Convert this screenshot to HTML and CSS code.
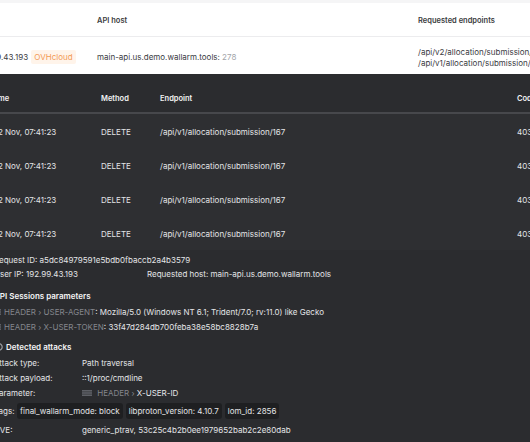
FILE: index.html
```html
<!DOCTYPE html>
<html lang="en">
<head>
    <meta charset="UTF-8">
    <title>Attack details</title>
    <link rel="stylesheet" href="styles.css">
</head>
<body>
    <div class="page">
        <div class="strip"></div>
        <div class="hosts">
            <div class="hosts-row head">
                <div class="cell ip-col">Source</div>
                <div class="cell">API host</div>
                <div class="cell">Requested endpoints</div>
            </div>
            <div class="hosts-row">
                <div class="cell ip-col">192.99.43.193 <span class="badge">OVHcloud</span></div>
                <div class="cell">main-api.us.demo.wallarm.tools: <span class="muted">278</span></div>
                <div class="cell endpoints">
                    <div>/api/v2/allocation/submission/167</div>
                    <div>/api/v1/allocation/submission/167</div>
                </div>
            </div>
        </div>

        <div class="dark">
            <div class="req-row head">
                <div>Time</div>
                <div>Method</div>
                <div>Endpoint</div>
                <div>Code</div>
            </div>
            <div class="req-row">
                <div class="time">22 Nov, 07:41:23</div>
                <div>DELETE</div>
                <div>/api/v1/allocation/submission/167</div>
                <div>403</div>
            </div>
            <div class="req-row">
                <div class="time">22 Nov, 07:41:23</div>
                <div>DELETE</div>
                <div>/api/v1/allocation/submission/167</div>
                <div>403</div>
            </div>
            <div class="req-row">
                <div class="time">22 Nov, 07:41:23</div>
                <div>DELETE</div>
                <div>/api/v1/allocation/submission/167</div>
                <div>403</div>
            </div>
            <div class="req-row">
                <div class="time">22 Nov, 07:41:23</div>
                <div>DELETE</div>
                <div>/api/v1/allocation/submission/167</div>
                <div>403</div>
            </div>

            <div class="details">
                <div class="line">Request ID: a5dc84979591e5bdb0fbaccb2a4b3579</div>
                <div class="line split">
                    <span class="user-ip">User IP: 192.99.43.193</span>
                    <span>Requested host: main-api.us.demo.wallarm.tools</span>
                </div>

                <div class="section-title">API Sessions parameters</div>
                <div class="line session">
                    <svg class="point-icon" width="10" height="6" viewBox="0 0 10 6"><rect x="0" y="0" width="10" height="1.6" fill="#5e6066"/><rect x="0" y="2.2" width="10" height="1.6" fill="#5e6066"/><rect x="0" y="4.4" width="10" height="1.6" fill="#5e6066"/></svg>
                    <span class="path">HEADER › USER-AGENT</span>: Mozilla/5.0 (Windows NT 6.1; Trident/7.0; rv:11.0) like Gecko
                </div>
                <div class="line session">
                    <svg class="point-icon" width="10" height="6" viewBox="0 0 10 6"><rect x="0" y="0" width="10" height="1.6" fill="#5e6066"/><rect x="0" y="2.2" width="10" height="1.6" fill="#5e6066"/><rect x="0" y="4.4" width="10" height="1.6" fill="#5e6066"/></svg>
                    <span class="path">HEADER › X-USER-TOKEN</span>: 33f47d284db700feba38e58bc8828b7a
                </div>

                <div class="section-title attacks">
                    <svg class="title-icon" width="8" height="8" viewBox="0 0 8 8"><circle cx="4" cy="4" r="3.2" fill="none" stroke="#9a9ca1" stroke-width="1.2"/></svg>
                    Detected attacks
                </div>
                <div class="kv"><span class="key">Attack type:</span><span>Path traversal</span></div>
                <div class="kv"><span class="key">Attack payload:</span><span>::1/proc/cmdline</span></div>
                <div class="kv">
                    <span class="key">Parameter:</span>
                    <span>
                        <svg class="point-icon" width="10" height="6" viewBox="0 0 10 6"><rect x="0" y="0" width="10" height="1.6" fill="#5e6066"/><rect x="0" y="2.2" width="10" height="1.6" fill="#5e6066"/><rect x="0" y="4.4" width="10" height="1.6" fill="#5e6066"/></svg>
                        <span class="path">HEADER ›</span> X-USER-ID
                    </span>
                </div>
                <div class="tags">
                    <span class="tags-label">Tags:</span>
                    <span class="tag">final_wallarm_mode: block</span>
                    <span class="tag">libproton_version: 4.10.7</span>
                    <span class="tag">lom_id: 2856</span>
                </div>
                <div class="kv cve"><span class="key">CVE:</span><span>generic_ptrav, 53c25c4b2b0ee1979652bab2c2e80dab</span></div>
            </div>
        </div>
    </div>
</body>
</html>
```

FILE: styles.css
```css
* {
    margin: 0;
    padding: 0;
    box-sizing: border-box;
}
body {
    width: 530px;
    height: 442px;
    overflow: hidden;
    background: #2b2c2f;
    font-family: Inter, "Noto Sans", sans-serif;
    font-size: 8px;
}
.page {
    margin-left: -40px;
    width: 640px;
}
.strip {
    height: 3px;
    background: #f5f5f6;
}

/* white hosts table */
.hosts {
    background: white;
    color: #3a3b3f;
}
.hosts-row {
    display: grid;
    grid-template-columns: 137px 321px 1fr;
    align-items: center;
    height: 37px;
    padding-top: 3px;
    border-bottom: 1px solid #ececee;
}
.hosts-row.head {
    height: 34px;
    padding-top: 1px;
    font-weight: 600;
    font-size: 7.5px;
    color: #3b3c40;
}
.hosts-row .ip-col {
    padding-left: 16px;
}
.hosts-row.head .ip-col {
    visibility: hidden;
}
.hosts-row:last-child {
    border-bottom: none;
}
.hosts-row .endpoints {
    padding-top: 1px;
}
.badge {
    display: inline-block;
    margin-left: 1px;
    padding: 2px 3px;
    background: #fff4ea;
    color: #f39a55;
    border-radius: 2px;
}
.muted {
    color: #a3a5aa;
}
.endpoints {
    line-height: 11px;
}

/* dark requests table */
.dark {
    background: #2b2c2f;
    color: #e4e5e7;
}
.req-row {
    display: grid;
    grid-template-columns: 110px 59px 357px 1fr;
    padding-left: 31px;
    padding-top: 2px;
    align-items: center;
    height: 34px;
    background: #2e2f32;
}
.req-row .time {
    padding-left: 2px;
}
.req-row.head {
    height: 40px;
    padding-top: 11px;
    font-weight: 600;
    font-size: 7.5px;
    color: #f2f2f3;
    background: #2b2c2f;
    border-bottom: 2px solid #47484c;
}

/* request details */
.details {
    padding: 3px 0 0 34px;
    background: #2b2c2f;
}
.line {
    height: 14px;
    display: flex;
    align-items: center;
}
.line.session {
    height: 15px;
    margin-left: -3px;
}
.split .user-ip {
    width: 153px;
}
.section-title {
    margin-top: 7px;
    height: 16px;
    display: flex;
    align-items: center;
    font-weight: 600;
    color: #f4f4f5;
}
.section-title.attacks {
    margin-top: 5px;
    height: 16px;
    margin-left: 1px;
}
.title-icon {
    margin-right: 3px;
}
.point-icon {
    margin-right: 3px;
    vertical-align: middle;
}
.path {
    color: #84868c;
}
.kv {
    display: flex;
    align-items: center;
    height: 15px;
}
.kv .key {
    width: 88px;
    flex-shrink: 0;
}
.tags {
    display: flex;
    align-items: center;
    gap: 3px;
    height: 19px;
    margin-top: 1px;
}
.tags-label {
    width: 20px;
}
.tag {
    background: #1e1f21;
    padding: 3px 3px;
    border-radius: 3px;
}
.kv.cve {
    margin-top: 1px;
    height: 18px;
}
```
